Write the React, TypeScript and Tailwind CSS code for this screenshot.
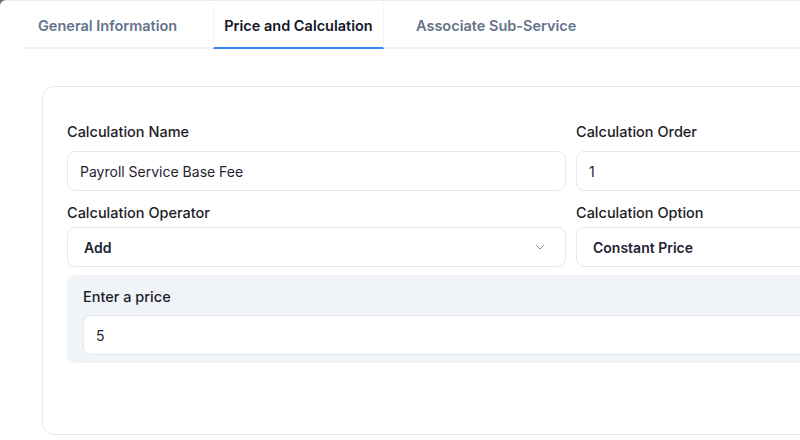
import { ChevronDown } from 'lucide-react'

const tabs = [
  { label: 'General Information', cls: 'w-[191px] pl-4 text-left' },
  { label: 'Price and Calculation', cls: 'w-[171px] text-center' },
  { label: 'Associate Sub-Service', cls: 'ml-5 pl-3 pr-3' },
]

function Field({ label, value, labelGap, bold }: { label: string; value: string; labelGap: string; bold?: boolean }) {
  return (
    <div>
      <label className={`block text-[14.5px] leading-5 font-[550] text-[#1c1c28] ${labelGap}`}>{label}</label>
      <div
        className={`h-10 rounded-lg border border-[#e3e8ef] bg-white flex items-center text-[14px] text-[#1f2333] ${
          bold ? 'px-4 font-semibold' : 'px-3'
        }`}
      >
        {value}
      </div>
    </div>
  )
}

export default function App() {
  const active = 1

  return (
    <div
      className="w-[800px] h-[440px] overflow-hidden bg-[#6b6b6b]"
      style={{ fontFamily: 'Inter, "Noto Sans", sans-serif' }}
    >
      <div className="h-full bg-white border-t border-[#ececec] rounded-tl-[6px] overflow-hidden">
        {/* Tabs */}
        <div className="ml-[22px] mt-[2px] flex border-b-2 border-[#f1f1f3] w-[1200px]">
          {tabs.map((t, i) => (
            <button
              key={t.label}
              className={`-mb-[2px] pt-[13px] pb-[11px] text-[14.5px] leading-5 font-semibold whitespace-nowrap border-b-2 ${t.cls} ${
                i === active
                  ? 'border-[#3b82f6] text-[#111827] border-x border-x-[#f6f6f8]'
                  : 'border-transparent text-[#64748b]'
              }`}
            >
              {t.label}
            </button>
          ))}
        </div>

        {/* Card */}
        <div className="ml-[42px] mt-[37px] w-[1060px] h-[349px] rounded-xl border border-[#e3e8ef] px-6 pt-[35px]">
          <div className="grid grid-cols-2 gap-x-[10px] w-[1008px]">
            <Field label="Calculation Name" value="Payroll Service Base Fee" labelGap="mb-[9px]" />
            <Field label="Calculation Order" value="1" labelGap="mb-[9px]" />
            <div className="mt-[12px]">
              <label className="block text-[14.5px] leading-5 font-medium text-[#1c1c28] mb-1">Calculation Operator</label>
              <div className="h-10 rounded-lg border border-[#e3e8ef] bg-white flex items-center justify-between pl-4 pr-[17px] text-[14px] font-semibold text-[#1f2333]">
                <span>Add</span>
                <ChevronDown className="w-4 h-4 text-[#8a8f99]" strokeWidth={1.5} />
              </div>
            </div>
            <div className="mt-[12px]">
              <label className="block text-[14.5px] leading-5 font-medium text-[#1c1c28] mb-1">Calculation Option</label>
              <div className="h-10 rounded-lg border border-[#e3e8ef] bg-white flex items-center px-4 text-[14px] font-semibold text-[#1f2333]">
                Constant Price
              </div>
            </div>
          </div>

          <div className="mt-[8px] w-[1008px] rounded-lg bg-[#f0f3f8] px-4 pt-3 pb-2">
            <label className="block text-[14.5px] leading-5 font-[550] text-[#1c1c28] mb-2">Enter a price</label>
            <div className="h-10 rounded-lg border border-[#e3e8ef] bg-white flex items-center px-3 text-[14px] text-[#1f2333]">
              5
            </div>
          </div>
        </div>
      </div>
    </div>
  )
}
